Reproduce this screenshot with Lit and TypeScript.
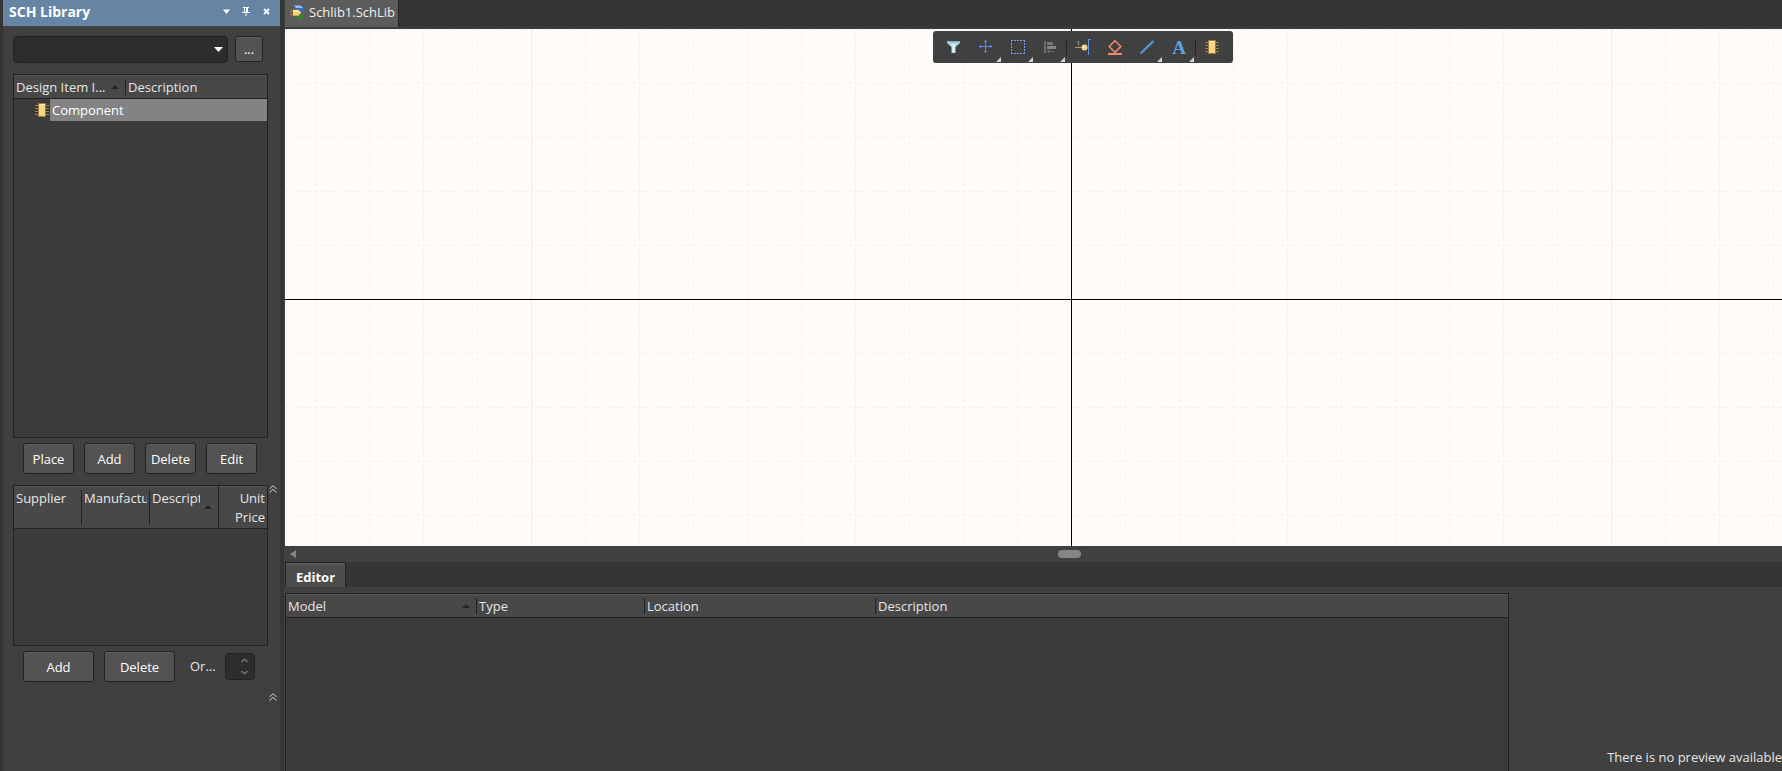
import { LitElement, html, svg, css, TemplateResult } from "lit";
import { customElement, property } from "lit/decorators.js";

const base = css`
  * { box-sizing: border-box; }
  :host { font: 13px/19px "Open Sans", "Noto Sans", sans-serif; color: #e6e6e6; }
  button, input, select { font: inherit; color: inherit; margin: 0; }
  svg { display: block; flex: none; }
`;

const tableStyles = css`
  .frame { border: 1px solid #222; background: #3b3b3b; }
  table { border-collapse: collapse; table-layout: fixed; width: 100%; }
  th { font-weight: 400; text-align: left; padding: 0; vertical-align: top; }
  thead tr { background: #484848; box-shadow: inset 0 1px #555; border-bottom: 1px solid #222; }
  .cell { display: flex; align-items: center; height: 23px; padding: 1px 0 0 2px; }
  .label { flex: 1; overflow: hidden; white-space: nowrap; margin-right: 2px; }
  .sort { width: 0; border: 4px solid transparent; border-top: 0; border-bottom-color: #262626; margin: 0 6px 0 2px; }
  .line { width: 1px; height: 16px; background: #222; }
`;

const legs = [2, 5, 8, 11];
const chip = (x: number, y: number) => svg`
  <g transform="translate(${x} ${y})" shape-rendering="crispEdges">
    ${legs.map((l) => svg`<path d="M0 ${l + 0.5}h14" stroke="#a0853f"/>`)}
    <rect x="3" width="8" height="14" fill="#9c7c35"/>
    <rect x="4" y="1" width="6" height="12" fill="#f8d687"/>
    <rect x="4" y="1" width="6" height="1" fill="#fff0c0"/>
  </g>`;

const chevrons = html`<svg width="8" height="8" viewBox="0 0 8 8" fill="none" stroke="#d8d8d8">
  <path d="M.5 4 4 .7 7.500 4M.5 7.700 4 4.400 7.500 7.700"/></svg>`;

@customElement("library-panel")
export class LibraryPanel extends LitElement {
  static styles = [base, tableStyles, css`
    :host { display: flex; flex-direction: column; background: #404040; border-left: 3px solid #353535; border-right: 4px solid #353535; }
    header { display: flex; align-items: center; height: 26px; padding: 0 4px 3px 6px; background: #6685a4; color: #fff; }
    h1 { flex: 1; font-size: 14px; margin: 0; }
    .tool { width: 20px; height: 20px; padding: 0; border: 0; background: none; display: grid; place-items: center; }
    .source { display: flex; gap: 7px; padding: 10px 17px 11px 10px; }
    .pick { flex: 1; position: relative; display: flex; }
    select { flex: 1; height: 27px; appearance: none; border: 1px solid #222; border-radius: 4px; background: #2d2d2d; }
    .pick svg { position: absolute; right: 5px; top: 11px; pointer-events: none; }
    .btn { height: 31px; flex: none; padding: 1px 0 0; border: 1px solid #222; border-radius: 3px; background: #535353; color: #fff; box-shadow: inset 0 1px #5f5f5f; }
    .more { width: 28px; height: 26px; }
    .items { flex: 1; margin: 0 12px 5px 10px; }
    td { padding: 0; height: 22px; }
    .item { display: flex; align-items: center; padding-left: 21px; }
    .name { flex: 1; height: 22px; line-height: 22px; margin-left: 1px; padding-left: 2px; background: #838383; color: #fff; }
    .row { display: flex; align-items: center; gap: 10px; padding-left: 20px; }
    .small { width: 51px; }
    .wide { width: 71px; }
    .supply { display: flex; gap: 1px; margin: 11px 3px 5px 10px; }
    .supply .frame { flex: 1; height: 161px; }
    .supply .cell { height: 42px; align-items: flex-start; padding-top: 3px; }
    .supply .line { height: 35px; margin-top: 1px; }
    .supply .sort { margin-top: 16px; }
    .supply .price { border-left: 1px solid #222; text-align: right; }
    .price .label { white-space: normal; }
    .spin { display: flex; align-items: center; gap: 9px; padding-left: 5px; }
    .qty { display: flex; justify-content: flex-end; align-items: center; width: 30px; height: 27px; padding-right: 6px; border: 1px solid #222; border-radius: 4px; background: #2d2d2d; }
    .qty input { width: 0; flex: 1; min-width: 0; height: 20px; padding: 0; border: 0; background: none; outline: 0; }
    .foot { display: flex; justify-content: flex-end; height: 89px; padding: 11px 3px 0 0; }
  `];

  render() {
    return html`
      <header>
        <h1>SCH Library</h1>
        <button class="tool" aria-label="Panel menu"><svg width="7" height="5"><path d="M0 .5h7L3.500 5z" fill="#fff"/></svg></button>
        <button class="tool" aria-label="Pin"><svg width="8" height="9" viewBox="0 0 8 9"><path d="M1 0h6v1H6v4h2v1H4.500v3h-1V6H0V5h2V1H1zM3 1v4h1V1z" fill="#fff"/></svg></button>
        <button class="tool" aria-label="Close"><svg width="7" height="7"><path d="M1 1l5 5M6 1 1 6" stroke="#fff" stroke-width="1.800"/></svg></button>
      </header>
      <div class="source">
        <div class="pick">
          <select aria-label="Filter"><option></option></select>
          <svg width="9" height="5"><path d="M0 0h9L4.500 5z" fill="#fff"/></svg>
        </div>
        <button class="btn more">...</button>
      </div>
      <div class="frame items">
        <table>
          <colgroup><col style="width:112px"><col></colgroup>
          <thead><tr>
            <th><div class="cell"><span class="label">Design Item I...</span><i class="sort"></i><i class="line"></i></div></th>
            <th><div class="cell"><span class="label">Description</span></div></th>
          </tr></thead>
          <tbody><tr><td colspan="2"><div class="item">
            <svg width="14" height="14">${chip(0, 0)}</svg><span class="name">Component</span>
          </div></td></tr></tbody>
        </table>
      </div>
      <div class="row">
        ${["Place", "Add", "Delete", "Edit"].map((t) => html`<button class="btn small">${t}</button>`)}
      </div>
      <div class="supply">
        <div class="frame">
          <table>
            <colgroup><col style="width:68px"><col style="width:68px"><col style="width:68px"><col></colgroup>
            <thead><tr>
              <th><div class="cell"><span class="label">Supplier</span><i class="line"></i></div></th>
              <th><div class="cell"><span class="label">Manufactu</span><i class="line"></i></div></th>
              <th><div class="cell"><span class="label">Descript</span><i class="sort"></i></div></th>
              <th><div class="cell price"><span class="label">Unit Price</span></div></th>
            </tr></thead>
          </table>
        </div>
        ${chevrons}
      </div>
      <div class="row">
        <button class="btn wide">Add</button>
        <button class="btn wide">Delete</button>
        <div class="spin">
          <label for="qty">Or...</label>
          <span class="qty"><input id="qty" type="text">
            <svg width="7" height="17" viewBox="0 0 7 17" fill="none" stroke="#b5b5b5"><path d="M.5 4 3.500 1l3 3M.5 13l3 3 3-3"/></svg>
          </span>
        </div>
      </div>
      <div class="foot">${chevrons}</div>
    `;
  }
}

interface Tool { name: string; icon: TemplateResult; more?: boolean; gap?: boolean; }

const tools: Tool[] = [
  { name: "Filter", icon: svg`<path d="M9 10h13v2l-4.500 4v6h-4v-6L9 12z" fill="#b5dbe5"/><path d="M9 10h13v1.500H9z" fill="#86b4c5"/><path d="M14.500 13h2v8h-2z" fill="#e8f7fa"/>` },
  { name: "Move", more: true, icon: svg`<path d="M9 15.500h13M15.500 9v13M10.500 14v3M20.500 14v3M14 10.500h3M14 20.500h3" stroke="#5f86d8" fill="none"/>` },
  { name: "Select", more: true, icon: svg`<path d="M9 9.500h14M9 22.500h14M9.500 9v14M22.500 9v14" stroke="#7c9cf0" stroke-dasharray="2 1" fill="none"/>` },
  { name: "Align", more: true, gap: true, icon: svg`<path d="M10 10h2v12h-2z" fill="#6d6d6d"/><path d="M13 11h6v3h-6z" fill="#767676"/><path d="M13 15h9v3h-9z" fill="#858585"/><path d="M13 20.500h7M15.500 18.500l-2 2 2 2" stroke="#6d6d6d" fill="none"/>` },
  { name: "Pin", icon: svg`<text x="9" y="15" font-size="8" fill="#a9b0ba">1</text><path d="M8 16.500h7" stroke="#b99a57"/><circle cx="17.500" cy="16.500" r="3" fill="#efcf91"/><circle cx="16.800" cy="15.800" r="1.200" fill="#fff0cc"/><path d="M24 8.500h-2.500V24" stroke="#5d95e8" fill="none"/>` },
  { name: "Symbol", icon: svg`<path d="M16 9.700l5.800 5.800-5.800 5.800-5.800-5.800z" stroke="#e9896d" stroke-width="1.600" fill="none"/><path d="M9 22h14v2H9z" fill="#e9896d"/>` },
  { name: "Line", more: true, icon: svg`<path d="M9.500 22.500l13-12.500" stroke="#5a9ae4" stroke-width="2"/>` },
  { name: "Text", more: true, gap: true, icon: svg`<text x="16" y="23" text-anchor="middle" font-family="Liberation Serif, serif" font-weight="700" font-size="19" fill="#5f9fe8">A</text>` },
  { name: "Component", icon: chip(9, 9) },
];

@customElement("schematic-view")
export class SchematicView extends LitElement {
  @property({ type: Number }) originX = 786;
  @property({ type: Number }) originY = 270;

  static styles = [base, css`
    :host { display: flex; flex-direction: column; min-height: 0; }
    .tabs { height: 29px; background: #353535; border-bottom: 2px solid #3c3c3c; display: flex; }
    .tab { display: flex; align-items: center; gap: 4px; height: 27px; padding: 0 3px 3px 5px; border: 0; border-right: 1px solid #222; background: #5c5c5c; color: #f0f0f0; }
    .sheet { flex: 1; position: relative; min-height: 0; overflow: hidden; background: #fffcf7; }
    .bar { position: absolute; left: 648px; top: 2px; height: 32px; padding: 0 5px; display: flex; align-items: center; background: #404040; border-radius: 3px; }
    .bar button { width: 32px; height: 32px; padding: 0; border: 0; background: none; }
    .split { width: 1px; height: 16px; background: #222; }
    .scroll { height: 16px; display: flex; align-items: center; padding-left: 5px; background: #404040; }
    .thumb { width: 23px; height: 8px; margin-left: 762px; border-radius: 4px; background: #858585; }
    .grid { width: 100%; height: 100%; }
  `];

  render() {
    const x = this.originX, y = this.originY;
    return html`
      <div class="tabs"><button class="tab">
        <svg width="15" height="15" viewBox="0 0 15 15">
          <path d="M3 .5h8l4 3-2 3.500-4-1z" fill="#2f6fc4"/><path d="M4 .5h6.500l2.500 2.500H6z" fill="#8fc0f5"/>
          <path d="M5 10h8v2l-2 3-1-2-2 2-1-2-2 1z" fill="#2f8a2c"/>
          <path d="M2.500 4.500h6l3.200 3.200-3.200 3.300h-6z" fill="#f0d27c" stroke="#5f5220" stroke-width=".6"/><path d="M3 5h5l1 1.500H3z" fill="#fff0b8"/><path d="M0 6.500h2M0 9.500h2" stroke="#b09040"/>
        </svg>Schlib1.SchLib</button></div>
      <div class="sheet">
        <svg class="grid" shape-rendering="crispEdges">
          <defs>
            <pattern id="rows" x="0" y=${y} width="6" height="54" patternUnits="userSpaceOnUse"><rect width="3" height="1" fill="#f0efec"/></pattern>
            <pattern id="cols" x=${x} y="4" width="54" height="6" patternUnits="userSpaceOnUse"><rect width="1" height="3" fill="#f0efec"/></pattern>
            <pattern id="major" x=${x} y="0" width="540" height="6" patternUnits="userSpaceOnUse"><rect width="1" height="6" fill="#eeedeb"/></pattern>
          </defs>
          <rect width="100%" height="100%" fill="url(#rows)"/>
          <rect width="100%" height="100%" fill="url(#cols)"/>
          <rect width="100%" height="100%" fill="url(#major)"/>
          <rect x=${x} width="1" height="100%" fill="#000"/>
          <rect y=${y} width="100%" height="1" fill="#000"/>
        </svg>
        <div class="bar">
          ${tools.map((t) => html`<button aria-label=${t.name}><svg width="32" height="32">${t.icon}${t.more ? svg`<path d="M31 26v5h-5z" fill="#d0d0d0"/>` : ""}</svg></button>${t.gap ? html`<i class="split"></i>` : ""}`)}
        </div>
      </div>
      <div class="scroll"><svg width="6" height="8"><path d="M6 0v8L0 4z" fill="#858585"/></svg><div class="thumb"></div></div>
    `;
  }
}

@customElement("model-editor")
export class ModelEditor extends LitElement {
  static styles = [base, tableStyles, css`
    :host { display: flex; flex-direction: column; height: 209px; background: #404040; }
    .tabs { height: 25px; background: #353535; display: flex; }
    .tab { padding: 4px 10px 0; border: 1px solid #222; border-bottom: 0; background: #4d4d4d; box-shadow: inset 0 2px #5c5c5c; color: #fff; font-weight: 700; }
    .body { flex: 1; display: flex; padding-top: 6px; }
    .frame { flex: 1; border-bottom: 0; }
    .preview { width: 273px; display: flex; justify-content: flex-end; align-items: flex-end; padding-bottom: 4px; overflow: hidden; white-space: nowrap; }
  `];

  render() {
    return html`
      <div class="tabs"><button class="tab">Editor</button></div>
      <div class="body">
        <div class="frame"><table>
          <colgroup><col style="width:191px"><col style="width:168px"><col style="width:231px"><col></colgroup>
          <thead><tr>
            <th><div class="cell"><span class="label">Model</span><i class="sort"></i><i class="line"></i></div></th>
            <th><div class="cell"><span class="label">Type</span><i class="line"></i></div></th>
            <th><div class="cell"><span class="label">Location</span><i class="line"></i></div></th>
            <th><div class="cell"><span class="label">Description</span></div></th>
          </tr></thead>
        </table></div>
        <div class="preview">There is no preview available</div>
      </div>
    `;
  }
}

@customElement("app-root")
export class AppRoot extends LitElement {
  static styles = css`
    :host { display: grid; grid-template-columns: 284px minmax(0, 1fr); height: 100vh; overflow: hidden; background: #404040; }
    main { display: flex; flex-direction: column; min-height: 0; border-left: 1px solid #404040; }
    schematic-view { flex: 1; }
  `;

  render() {
    return html`<library-panel></library-panel>
      <main><schematic-view></schematic-view><model-editor></model-editor></main>`;
  }
}
